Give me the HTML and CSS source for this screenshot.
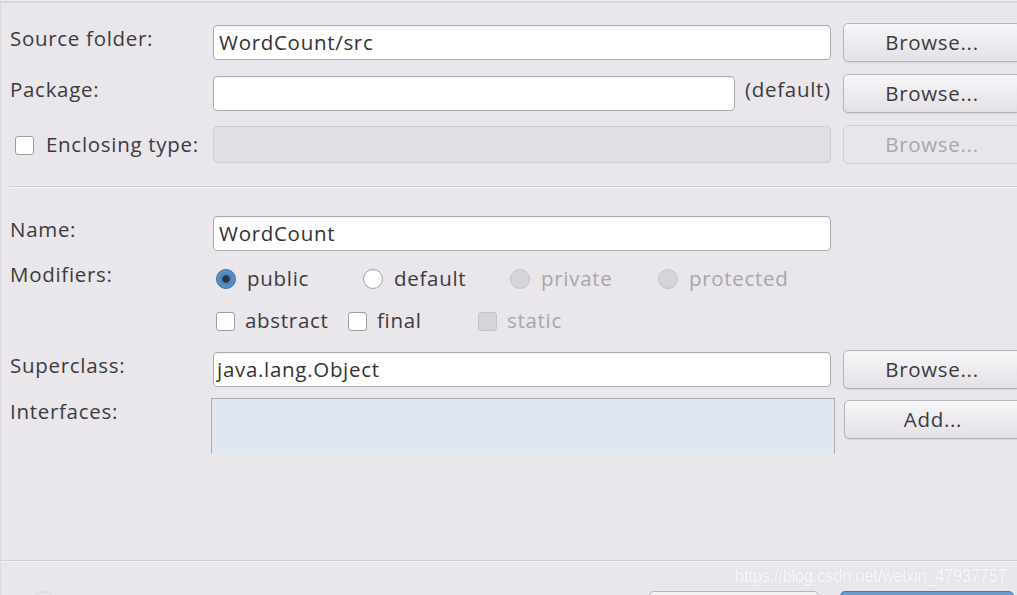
FILE: index.html
```html
<!DOCTYPE html>
<html>
<head>
<meta charset="utf-8">
<link rel="stylesheet" href="styles.css">
</head>
<body>
<div class="page">
  <div class="row r1">
    <div class="label">Source folder:</div>
    <div class="field"><div class="input">WordCount/src</div></div>
    <div class="btn">Browse...</div>
  </div>
  <div class="row r2">
    <div class="label">Package:</div>
    <div class="field pkg"><div class="input short"></div><span class="deflabel">(default)</span></div>
    <div class="btn">Browse...</div>
  </div>
  <div class="row r3">
    <div class="label check-label"><span class="cb"></span><span>Enclosing type:</span></div>
    <div class="field"><div class="input disabled"></div></div>
    <div class="btn disabled">Browse...</div>
  </div>
  <div class="sep"></div>
  <div class="row r4">
    <div class="label">Name:</div>
    <div class="field"><div class="input">WordCount</div></div>
  </div>
  <div class="row r5">
    <div class="label top">Modifiers:</div>
    <div class="field radios">
      <span class="opt"><span class="radio checked"></span>public</span>
      <span class="opt"><span class="radio"></span>default</span>
      <span class="opt dis"><span class="radio disabled"></span>private</span>
      <span class="opt dis"><span class="radio disabled"></span>protected</span>
    </div>
  </div>
  <div class="row r6">
    <div class="label"></div>
    <div class="field checks">
      <span class="opt"><span class="cb"></span>abstract</span>
      <span class="opt"><span class="cb"></span>final</span>
      <span class="opt dis"><span class="cb disabled"></span>static</span>
    </div>
  </div>
  <div class="row r7">
    <div class="label">Superclass:</div>
    <div class="field"><div class="input">java.lang.Object</div></div>
    <div class="btn">Browse...</div>
  </div>
  <div class="row r8">
    <div class="label top">Interfaces:</div>
    <div class="field"><div class="list"></div></div>
    <div class="btn">Add...</div>
  </div>
  <div class="spacer"></div>
  <div class="sep bottom"></div>
  <div class="footer">
    <span class="help"></span>
    <span class="fbtn b1"></span>
    <span class="fbtn b2"></span>
  </div>
</div>
<div class="watermark">https://blog.csdn.net/weixin_47937757</div>
</body>
</html>
```

FILE: styles.css
```css
html, body {
  margin: 0;
  padding: 0;
  width: 1017px;
  height: 595px;
  overflow: hidden;
  background: #e9e6ec;
}
body {
  font-family: "Open Sans", "DejaVu Sans", sans-serif;
  font-size: 20.5px;
  letter-spacing: 0.7px;
  color: #3c3b3e;
  position: relative;
}
.page {
  border-top: 2px solid #d9d6dc;
  border-left: 1px solid #dcd9df;
  margin-top: 1px;
  height: 594px;
  box-sizing: border-box;
  display: flex;
  flex-direction: column;
  overflow: hidden;
}
.row {
  display: flex;
  align-items: center;
  height: 40px;
  flex: none;
}
.r1 { margin-top: 19px; }
.r2 { margin-top: 11px; }
.r3 { margin-top: 11px; }
.r4 { margin-top: 25px; }
.r5 { margin-top: 6px; }
.r6 { margin-top: 2px; }
.r7 { margin-top: 8px; }
.r8 { margin-top: 9px; height: 56px; align-items: flex-start; }

.label {
  width: 202px;
  padding-left: 9px;
  box-sizing: border-box;
  flex: none;
  padding-bottom: 9px;
  white-space: nowrap;
}
.label.top {
  align-self: flex-start;
  padding-top: 1px;
  padding-bottom: 0;
}
.r8 .label.top { padding-top: 0; margin-top: -1px; }
.check-label {
  display: flex;
  align-items: center;
  padding-left: 14px;
  padding-bottom: 0;
  gap: 12px;
}
.field {
  width: 618px;
  flex: none;
  margin-left: 10px;
}
.r8 .field { margin-left: 8px; width: 624px; }
.input {
  height: 35px;
  box-sizing: border-box;
  background: #ffffff;
  border: 1px solid #aeabb1;
  border-radius: 4px;
  padding-left: 5px;
  line-height: 33px;
  color: #333236;
  box-shadow: inset 0 1px 1px rgba(0,0,0,0.06);
  white-space: nowrap;
}
.r7 .input { padding-left: 3px; }
.input.disabled {
  background: #e1dfe4;
  border-color: #d0cdd3;
  height: 37px;
  box-shadow: none;
}
.pkg {
  display: flex;
  align-items: center;
}
.input.short { width: 522px; }
.deflabel {
  margin-left: 10px;
  padding-bottom: 8px;
  white-space: nowrap;
}
.btn {
  width: 178px;
  height: 39px;
  flex: none;
  margin-left: 12px;
  box-sizing: border-box;
  border: 1px solid #b6b3b9;
  border-radius: 5px;
  background: linear-gradient(#f7f6f8, #ebe9ed 60%, #e4e2e6);
  box-shadow: 0 1px 1px rgba(0,0,0,0.08);
  display: flex;
  align-items: center;
  justify-content: center;
  padding-bottom: 1px;
  color: #3c3b3e;
  white-space: nowrap;
}
.r8 .btn { margin-left: 9px; margin-top: 2px; }
.btn.disabled {
  color: #a9a7ac;
  border-color: #d1ced4;
  background: #e8e6ea;
  box-shadow: none;
}
.sep {
  height: 1px;
  background: #d1ced4;
  border-bottom: 1px solid #f3f2f5;
  flex: none;
  margin-top: 22px;
  margin-left: 8px;
}
.sep.bottom { margin-top: 0; margin-left: 0; }
.spacer { flex: 1; }
.radios {
  display: grid;
  grid-template-columns: 147px 147px 148px auto;
  margin-left: 13px;
  width: 615px;
}
.checks {
  display: grid;
  grid-template-columns: 132px 130px auto;
  margin-left: 13px;
  width: 615px;
}
.opt {
  display: flex;
  align-items: center;
  gap: 11px;
  white-space: nowrap;
  padding-bottom: 2px;
}
.checks .opt { gap: 10px; }
.opt.dis { color: #a8a6ab; }
.radio {
  width: 20px;
  height: 20px;
  box-sizing: border-box;
  border-radius: 50%;
  border: 1px solid #a3a0a7;
  background: #fff;
  flex: none;
  margin-top: 2px;
}
.radio.checked {
  border-color: #3f6b9c;
  background: radial-gradient(circle, #2a3340 0 3.2px, #4c7fb6 4.2px, #5d93cc 9px);
}
.radio.disabled {
  background: #d6d4d9;
  border-color: #c5c3c8;
}
.cb {
  width: 19px;
  height: 19px;
  box-sizing: border-box;
  border: 1px solid #9f9ca3;
  border-radius: 3px;
  background: #fff;
  flex: none;
  margin-top: 2px;
}
.cb.disabled {
  background: #d6d4d9;
  border-color: #c5c3c8;
}
.list {
  height: 56px;
  box-sizing: border-box;
  background: #dfe8f1;
  border: 1px solid #aeabb1;
  border-bottom: none;
}
.footer {
  height: 33px;
  flex: none;
  display: flex;
  align-items: flex-start;
  padding-top: 29px;
  box-sizing: border-box;
  overflow: hidden;
}
.help {
  width: 20px;
  height: 20px;
  border: 1px solid #d9d6dc;
  border-radius: 50%;
  margin-left: 31px;
  flex: none;
}
.fbtn {
  height: 38px;
  border-radius: 5px;
  flex: none;
  box-sizing: border-box;
}
.b1 {
  width: 170px;
  margin-left: 595px;
  border: 1px solid #b6b3b9;
  background: #f3f2f5;
}
.b2 {
  width: 174px;
  margin-left: 21px;
  border: 1px solid #4a79ad;
  background: #6d9bd0;
}
.watermark {
  position: absolute;
  left: 735px;
  top: 565px;
  font-family: "Liberation Sans", sans-serif;
  font-size: 19px;
  letter-spacing: -0.2px;
  color: rgba(255, 255, 255, 0.85);
  text-shadow: 0 0 1px rgba(200, 200, 210, 0.6);
  transform: scaleX(0.86);
  transform-origin: left top;
  white-space: nowrap;
}
```
